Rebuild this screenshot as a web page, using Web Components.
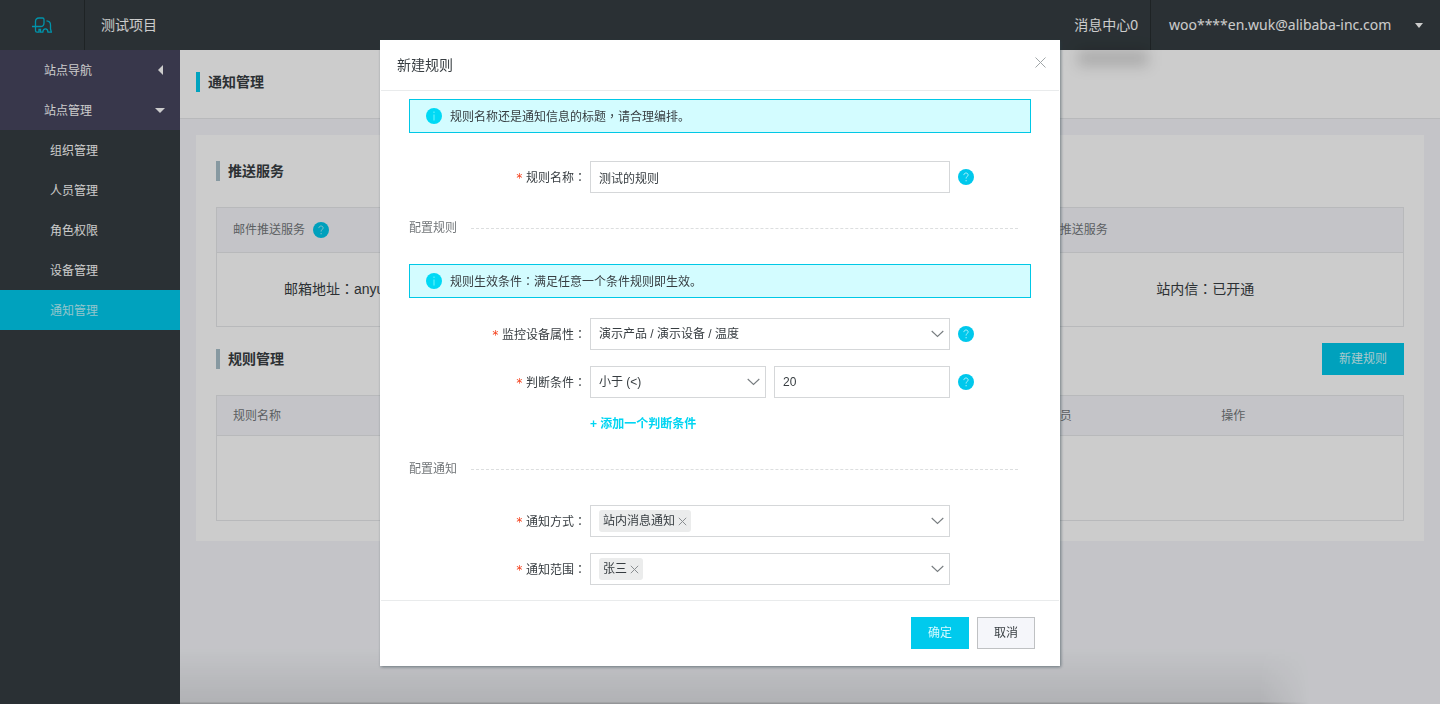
<!DOCTYPE html>
<html lang="zh-CN">
<head>
<meta charset="utf-8">
<title>通知管理</title>
<style>
html, body { margin: 0; min-height: 100%; }
body {
  font: 12px/20px "Liberation Sans", "Noto Sans CJK SC", sans-serif;
  color: #373d41;
  background: #f5f6fa;
}
</style>
</head>
<body>
<console-app></console-app>

<script>
const define = (name, html, setup) => {
  const tpl = document.createElement('template');
  tpl.innerHTML = `<style>
    *, *::before, *::after { box-sizing: border-box; }
    a { color: inherit; text-decoration: none; }
    button, input, select { font: inherit; color: inherit; margin: 0; }
    h1, h2, h3, ul { margin: 0; padding: 0; font-weight: inherit; font-size: inherit; list-style: none; }
    .colon { font-family: "Noto Sans CJK TC", sans-serif; }
  </style>` + html;
  customElements.define(name, class extends HTMLElement {
    constructor() {
      super();
      this.attachShadow({ mode: 'open' }).append(tpl.content.cloneNode(true));
      if (setup) setup(this, this.shadowRoot);
    }
  });
};

/* round question mark */
define('help-icon', `
<style>
  :host { display: block; width: 16px; height: 16px; flex: none; }
  svg { display: block; }
</style>
<svg width="16" height="16" viewBox="0 0 16 16" role="img" aria-label="帮助">
  <circle cx="8" cy="8" r="8" fill="#00c8ec"/>
  <path d="M5.9 6.1c0-1.3.9-2.1 2.1-2.1s2.1.8 2.1 1.9c0 1.6-2 1.7-2 3.6M8.1 11v1.3" fill="none" stroke="#b9f4fc" stroke-width=".9"/>
</svg>`);

/* cyan information strip */
define('info-notice', `
<style>
  :host { display: flex; align-items: center; gap: 8px; height: 34px; padding: 0 16px;
    box-sizing: border-box; border: 1px solid #00c8e6; background: #d3fcff; }
  svg { flex: none; }
</style>
<svg width="16" height="16" viewBox="0 0 16 16" aria-hidden="true">
  <circle cx="8" cy="8" r="8" fill="#00d9f5"/>
  <path d="M8 3.6v1.4M8 6.4v6" stroke="#5cf0fb" stroke-width="1.2"/>
</svg>
<span><slot></slot></span>`);

/* form section heading followed by a dashed rule */
define('form-section', `
<style>
  :host { display: flex; align-items: center; gap: 14px; margin: 25px 13px 26px 0; color: #73777a; }
  i { flex: 1; border-top: 1px dashed #dcdedf; }
</style>
<h3><slot></slot></h3><i></i>`);

/* label, control, help */
define('form-row', `
<style>
  :host { display: grid; grid-template-columns: 181px minmax(0, 360px) 16px; align-items: center; min-height: 32px; }
  .label { text-align: right; padding-right: 4px; }
  .star { color: #f5411c; margin-right: 3px; font-family: "DejaVu Sans Mono", monospace; }
  .control { display: grid; grid-auto-flow: column; grid-auto-columns: minmax(0, 1fr); gap: 8px; }
  .help { padding-left: 8px; }
</style>
<div class="label"><span class="star">*</span><slot name="label"></slot></div>
<div class="control"><slot></slot></div>
<div class="help"><slot name="help"></slot></div>`);

/* removable value inside a picker */
define('value-tag', `
<style>
  :host { display: inline-flex; align-items: center; height: 22px; padding: 0 4px; gap: 3px;
    border-radius: 3px; background: #ebecec; flex: none; }
  button { display: block; width: 9px; height: 9px; padding: 0; border: 0; background: none; }
  svg { display: block; }
</style>
<span><slot></slot></span>
<button type="button" aria-label="移除"><svg width="9" height="9" viewBox="0 0 9 9"><path d="M.8.8l7.4 7.4M8.2.8L.8 8.2" stroke="#8a8e91" fill="none"/></svg></button>`);

define('action-button', `
<style>
  :host { display: block; }
  button { display: block; height: 32px; padding: 0 16px; border: 1px solid #bfc1c3; background: #f5f6fa; line-height: 20px; }
  :host([primary]) button { border-color: #00caed; background: #00caed; color: #d4faff; }
</style>
<button type="button"><slot></slot></button>`);

/* heading with a vertical bar */
define('bar-title', `
<style>
  :host { display: block; border-left: 4px solid var(--bar, #a9c0ca); padding-left: 8px; font-size: 14px; font-weight: 700; }
</style>
<h2><slot></slot></h2>`);

define('top-bar', `
<style>
  :host { display: flex; height: 50px; background: #353d41; color: #fff; font-size: 14px; }
  .logo { width: 85px; display: flex; align-items: center; justify-content: center; border-right: 1px solid #262c2f; }
  .project { padding: 0 16px; align-self: center; flex: 1; }
  .messages { position: relative; display: flex; align-items: center; padding-right: 12px; border-right: 1px solid #262c2f; }
  .messages::after { content: ""; position: absolute; top: 50px; left: 4px; right: 2px; height: 16px; background: rgba(0,0,0,.16); filter: blur(7px); }
  .user { display: flex; align-items: center; justify-content: space-between; gap: 14px; min-width: 289px; padding: 0 17px 0 18px; font-family: "Noto Sans", sans-serif; }
  .user i { border: 4px solid transparent; border-top: 5px solid #fff; border-bottom: 0; }
</style>
<a class="logo" href="#" aria-label="首页"><svg width="20" height="16" viewBox="0 0 20 16" fill="none" stroke="#00b8d6" stroke-width="1.3">
  <path d="M3.500 9.500V4.500Q3.500 1 7 1H10.500Q12 1 12 2.500V6Q12 9.500 8.500 9.500H0"/>
  <path d="M3.500 9.500V13.500Q3.500 15.200 5 15.200H7V12.500H8.500V15.200H10.800Q11 11.800 13.400 11.800T16 15.200H19.400L18.500 12V8Q18.500 4 14.500 3.800"/>
</svg></a>
<span class="project">测试项目</span>
<a class="messages" href="#">消息中心0</a>
<a class="user" href="#"><span>woo****en.wuk@alibaba-inc.com</span><i></i></a>`);

define('side-nav', `
<style>
  :host { display: block; background: #353d41; color: #fff; }
  a { display: flex; align-items: center; justify-content: space-between; height: 40px; padding: 0 15px 0 50px; }
  span { padding-top: 2px; }
  .group { background: #46455e; padding: 0 15px 0 44px; }
  .active { background: #00cbee; color: #b8f6ff; }
  .left { border: 5px solid transparent; border-right-color: #fff; border-left: 0; margin-right: 2px; }
  .down { border: 5px solid transparent; border-top-color: #fff; border-bottom: 0; }
</style>
<nav>
  <a class="group" href="#"><span>站点导航</span><i class="left"></i></a>
  <a class="group" href="#"><span>站点管理</span><i class="down"></i></a>
  <a href="#"><span>组织管理</span></a>
  <a href="#"><span>人员管理</span></a>
  <a href="#"><span>角色权限</span></a>
  <a href="#"><span>设备管理</span></a>
  <a class="active" href="#" aria-current="page"><span>通知管理</span></a>
</nav>`);

define('notice-page', `
<style>
  :host { display: block; min-width: 0; }
  .head { display: flex; align-items: center; height: 69px; padding: 0 16px 4px; background: #fff; border-bottom: 1px solid #e6e8ea; --bar: #00cbee; }
  .card { margin: 16px; padding: 26px 20px 20px; background: #fff; }
  table { width: 100%; border-collapse: separate; border-spacing: 0; border: 1px solid #e6e8ea; table-layout: fixed; }
  th { font-weight: 400; text-align: left; color: #73777a; background: #f5f6fa; padding: 0 16px; border-bottom: 1px solid #e6e8ea; }
  td { padding: 0 0 2px; font-size: 14px; }
  .services { margin-top: 26px; }
  .services th { height: 45px; }
  .services td { height: 73px; text-align: center; }
  .services td.mail { text-align: left; padding-left: 67px; }
  .with-help { display: flex; align-items: center; gap: 8px; }
  .bar { display: flex; align-items: center; justify-content: space-between; margin: 16px 0 20px; }
  .rules th { height: 40px; }
  .rules td { height: 84px; }
</style>
<div class="head"><bar-title>通知管理</bar-title></div>
<main class="card">
  <bar-title>推送服务</bar-title>
  <table class="services">
    <thead><tr><th><span class="with-help">邮件推送服务<help-icon></help-icon></span></th><th></th><th>站内信推送服务</th></tr></thead>
    <tbody><tr><td class="mail">邮箱地址<span class="colon" lang="zh-TW">：</span>anyu</td><td></td><td>站内信<span class="colon" lang="zh-TW">：</span>已开通</td></tr></tbody>
  </table>
  <div class="bar"><bar-title>规则管理</bar-title><action-button primary>新建规则</action-button></div>
  <table class="rules">
    <thead><tr><th>规则名称</th><th></th><th></th><th></th><th>通知人员</th><th>操作</th></tr></thead>
    <tbody><tr><td colspan="6"></td></tr></tbody>
  </table>
</main>`);

define('rule-dialog', `
<style>
  :host { display: block; width: 680px; max-width: 100%; background: #fff; box-shadow: 1px 1px 3px rgba(40,60,70,.55); }
  header { display: flex; align-items: center; justify-content: space-between; height: 50px; padding: 0 14px 0 17px; font-size: 14px; }
  .close { width: 11px; height: 11px; padding: 0; border: 0; background: none; margin-bottom: 5px; }
  .close svg { display: block; }
  form { margin: 0 1px; padding: 8px 28px 15px; border: 1px solid #e9ebec; border-width: 1px 0; }
  .intro { margin-bottom: 28px; }
  .rule { margin-bottom: 20px; }
  .rows { display: grid; gap: 16px; }
  input, select, .picker { flex: 1; min-width: 0; width: 100%; height: 32px; padding: 0 8px; border: 1px solid #d5d7d9; border-radius: 0; background: #fff; outline: 0; }
  select { appearance: none; padding-right: 32px; background: #fff var(--arrow) no-repeat right 5px center; }
  .picker { display: flex; align-items: center; background: #fff var(--arrow) no-repeat right 5px center; }
  .picker input { height: 20px; border: 0; background: none; }
  select, .picker { --arrow: url("data:image/svg+xml,%3Csvg xmlns='http://www.w3.org/2000/svg' width='13' height='8'%3E%3Cpath d='M.7 1l5.800 5.500L12.300 1' fill='none' stroke='%23787d80' stroke-width='1.1'/%3E%3C/svg%3E"); }
  .add { margin-left: 181px; justify-self: start; color: #00d5f2; font-weight: 700; }
  footer { display: flex; justify-content: flex-end; gap: 8px; padding: 16px 25px 17px; }
</style>
<header>
  <h2 id="title">新建规则</h2>
  <button class="close" type="button" aria-label="关闭"><svg width="11" height="11" viewBox="0 0 11 11"><path d="M.5.5l10 10M10.500.5l-10 10" stroke="#a0a6a8" fill="none"/></svg></button>
</header>
<form>
  <info-notice class="intro">规则名称还是通知信息的标题<span class="colon" lang="zh-TW">，</span>请合理编排。</info-notice>
  <form-row>
    <label slot="label" for="name">规则名称<span class="colon" lang="zh-TW">：</span></label>
    <input id="name" type="text" value="测试的规则">
    <help-icon slot="help"></help-icon>
  </form-row>
  <form-section>配置规则</form-section>
  <info-notice class="rule">规则生效条件<span class="colon" lang="zh-TW">：</span>满足任意一个条件规则即生效。</info-notice>
  <div class="rows">
    <form-row>
      <label slot="label" for="property">监控设备属性<span class="colon" lang="zh-TW">：</span></label>
      <select id="property"><option>演示产品 / 演示设备 / 温度</option></select>
      <help-icon slot="help"></help-icon>
    </form-row>
    <form-row>
      <label slot="label" for="operator">判断条件<span class="colon" lang="zh-TW">：</span></label>
      <select id="operator"><option>小于 (&lt;)</option></select>
      <input type="text" value="20" aria-label="阈值">
      <help-icon slot="help"></help-icon>
    </form-row>
    <a class="add" href="#">+ 添加一个判断条件</a>
  </div>
  <form-section>配置通知</form-section>
  <div class="rows">
    <form-row>
      <label slot="label" for="method">通知方式<span class="colon" lang="zh-TW">：</span></label>
      <div class="picker"><value-tag>站内消息通知</value-tag><input id="method" type="text"></div>
    </form-row>
    <form-row>
      <label slot="label" for="scope">通知范围<span class="colon" lang="zh-TW">：</span></label>
      <div class="picker"><value-tag>张三</value-tag><input id="scope" type="text"></div>
    </form-row>
  </div>
</form>
<footer>
  <action-button primary>确定</action-button>
  <action-button>取消</action-button>
</footer>`);

define('console-app', `
<style>
  :host { display: grid; grid-template-rows: auto 1fr; min-height: 100vh; }
  .body { display: grid; grid-template-columns: 180px minmax(0, 1fr); }
  .overlay { position: fixed; inset: 0; display: flex; justify-content: center; align-items: flex-start;
    padding-top: 40px; overflow: auto; background: rgba(0,0,0,.2); }
  .shade { position: fixed; left: 180px; right: 130px; bottom: 0; height: 56px;
    background: linear-gradient(rgba(0,0,0,0), rgba(0,0,0,.09) 54px, rgba(0,0,0,.24) 55px);
    mask-image: linear-gradient(to left, transparent, #000 50px); }
</style>
<top-bar></top-bar>
<div class="body"><side-nav></side-nav><notice-page></notice-page></div>
<div class="shade"></div>
<div class="overlay"><rule-dialog role="dialog" aria-label="新建规则" aria-modal="true"></rule-dialog></div>`);
</script>
</body>
</html>
